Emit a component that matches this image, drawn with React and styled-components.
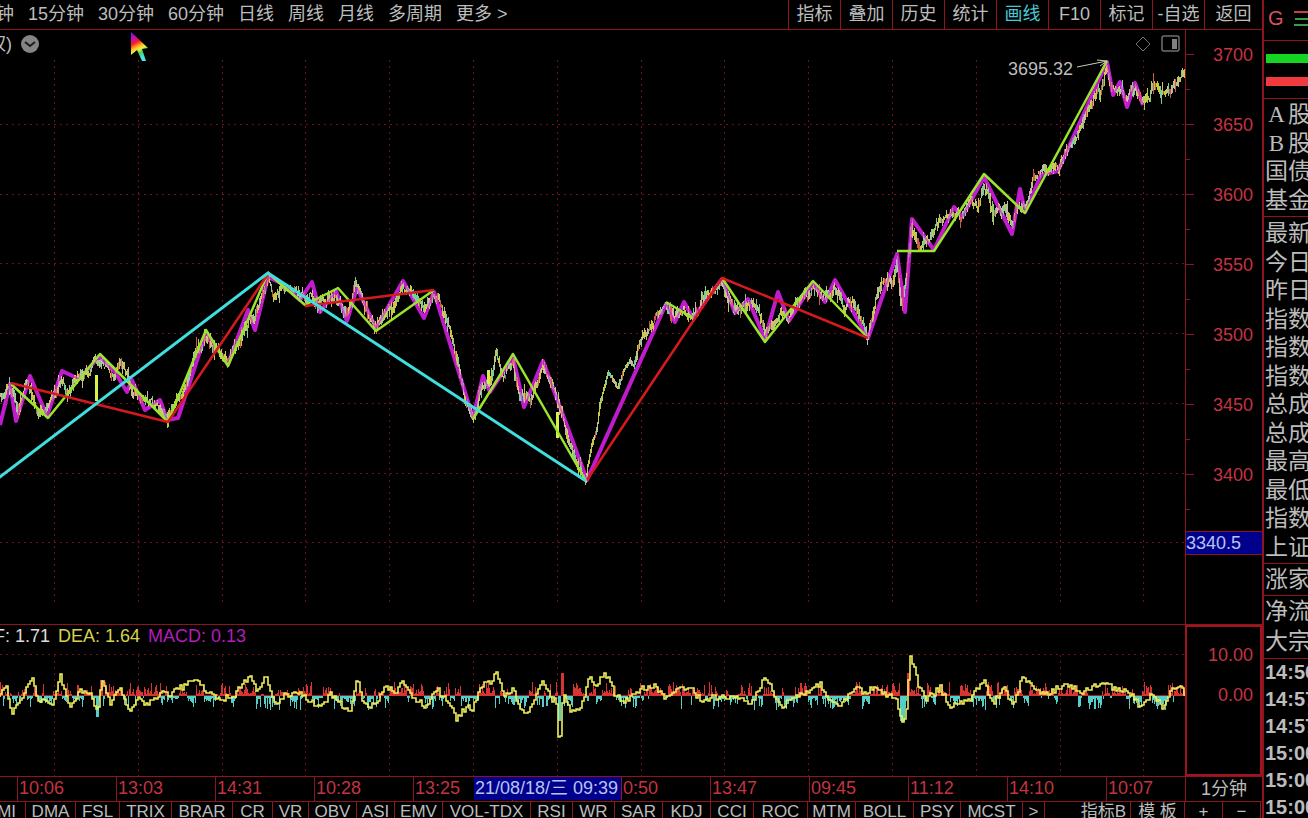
import React from 'react'
import styled, { createGlobalStyle } from 'styled-components'

const LINE = '#8e1420'
const DOT = '#6e121a'
const LABEL = '#c23440'
const TEXT = '#bcbcbc'

const PERIODS = ['5分钟', '15分钟', '30分钟', '60分钟', '日线', '周线', '月线', '多周期', '更多 >']

const TOOLS = ['指标', '叠加', '历史', '统计', '画线', 'F10', '标记', '-自选', '返回']

const ACTIVE_TOOL = '画线'

const PRICES = ['3700', '3650', '3600', '3550', '3500', '3450', '3400']

const TIMES = ['10:06', '13:03', '14:31', '10:28', '13:25', '', '10:50', '13:47', '09:45', '11:12', '14:10', '10:07']

const INDICATORS = [
  ['DMI', 50], ['DMA', 50], ['FSL', 44], ['TRIX', 52], ['BRAR', 61], ['CR', 40], ['VR', 36],
  ['OBV', 48], ['ASI', 38], ['EMV', 48], ['VOL-TDX', 88], ['RSI', 42], ['WR', 42], ['SAR', 48],
  ['KDJ', 48], ['CCI', 43], ['ROC', 54], ['MTM', 48], ['BOLL', 58], ['PSY', 47], ['MCST', 62], ['>', 22]
]

const QUOTES = ['最新', '今日', '昨日', '指数', '指数', '指数', '总成', '总成', '最高', '最低', '指数', '上证']

const TICKS = ['14:56', '14:57', '14:57', '15:00', '15:00', '15:00']

const SEGMENT_LINE = [
  [-4, 480], [268, 273], [586, 481]
]

const TREND_LINES = [
  [[11, 383], [168, 422], [268, 274]],
  [[305, 306], [434, 290]],
  [[587, 480], [722, 278], [868, 338]]
]

const STROKE_LINES = [
  [[11, 384], [48, 418], [100, 354], [168, 422], [206, 330], [228, 366], [268, 273], [305, 305], [338, 288], [376, 331], [434, 290]],
  [[473, 419], [513, 354], [586, 481]],
  [[666, 302], [693, 318]],
  [[722, 278], [765, 342], [813, 281], [868, 338]],
  [[897, 251], [934, 251], [984, 174], [1025, 213], [1107, 61]]
]

const PEN_LINE = [
  [0, 425], [10, 384], [16, 421], [30, 376], [47, 416], [62, 371], [79, 379], [99, 357], [115, 372], [127, 392],
  [132, 380], [145, 410], [160, 400], [167, 420], [178, 418], [206, 333], [228, 364], [248, 310], [255, 330],
  [268, 277], [283, 284], [300, 300], [312, 282], [320, 312], [336, 291], [347, 321], [357, 288], [376, 328],
  [403, 281], [424, 318], [434, 292], [473, 418], [483, 376], [490, 392], [513, 357], [524, 407], [543, 361],
  [587, 480], [666, 304], [675, 322], [684, 302], [693, 318], [722, 279], [735, 313], [748, 299], [765, 339],
  [778, 292], [789, 321], [813, 283], [825, 302], [835, 280], [868, 338], [897, 254], [905, 312], [912, 219],
  [934, 250], [954, 207], [962, 217], [984, 177], [1012, 234], [1020, 189], [1025, 212], [1041, 175], [1058, 171],
  [1107, 62], [1113, 95], [1120, 82], [1127, 107], [1135, 83], [1143, 105]
]

const PRICE_LINE = [
  [0, 398], [5, 390], [8, 382], [14, 388], [18, 408], [24, 390], [28, 382], [34, 398], [38, 412], [46, 408],
  [52, 392], [62, 376], [68, 392], [75, 380], [90, 366], [99, 358], [106, 364], [114, 374], [120, 357],
  [127, 372], [132, 384], [142, 398], [150, 402], [160, 408], [168, 416], [174, 400], [184, 386], [196, 350],
  [206, 335], [214, 345], [228, 362], [240, 340], [248, 318], [256, 310], [268, 281], [274, 293], [283, 281],
  [290, 285], [300, 295], [312, 290], [320, 303], [336, 292], [347, 315], [352, 300], [355, 280], [360, 290],
  [376, 325], [392, 305], [403, 285], [412, 290], [424, 312], [430, 297], [434, 294], [443, 308], [452, 333],
  [457, 360], [465, 395], [473, 414], [478, 400], [483, 385], [490, 385], [496, 354], [502, 372], [513, 360],
  [520, 390], [530, 400], [543, 367], [551, 380], [558, 400], [563, 415], [570, 440], [577, 462], [586, 475],
  [592, 445], [597, 430], [600, 405], [608, 373], [612, 376], [618, 388], [624, 370], [630, 360], [634, 366],
  [640, 342], [644, 332], [650, 325], [660, 308], [666, 306], [675, 315], [684, 310], [690, 314], [700, 305],
  [706, 292], [712, 289], [722, 282], [727, 292], [735, 308], [745, 305], [757, 303], [761, 318], [765, 334],
  [780, 310], [789, 316], [800, 300], [812, 286], [825, 295], [836, 288], [845, 308], [853, 298], [862, 320],
  [868, 332], [876, 300], [882, 280], [888, 278], [893, 283], [897, 260], [901, 298], [903, 300], [907, 270],
  [912, 224], [918, 237], [920, 247], [925, 242], [930, 235], [936, 225], [940, 215], [950, 212], [962, 214],
  [972, 200], [978, 204], [984, 184], [990, 197], [994, 213], [998, 205], [1002, 212], [1006, 208],
  [1012, 225], [1018, 205], [1022, 203], [1027, 205], [1034, 174], [1040, 172], [1048, 165], [1058, 168],
  [1066, 152], [1080, 126], [1094, 96], [1098, 85], [1101, 93], [1107, 68], [1113, 90], [1122, 88],
  [1127, 98], [1135, 88], [1143, 100], [1150, 94], [1155, 84], [1160, 90], [1165, 84], [1170, 92],
  [1175, 80], [1179, 73], [1185, 67]
]

const DIF_LINE = [
  [0, 697], [5, 684], [12, 714], [24, 693], [31, 677], [37, 700], [52, 703], [60, 676], [69, 706], [80, 691],
  [90, 692], [97, 712], [101, 680], [106, 693], [110, 705], [119, 688], [130, 711], [138, 696], [145, 706],
  [160, 693], [170, 695], [176, 685], [182, 688], [190, 680], [198, 680], [205, 692], [220, 699], [232, 697],
  [240, 686], [250, 677], [256, 690], [265, 676], [275, 706], [285, 695], [300, 694], [320, 708], [330, 694],
  [350, 712], [357, 679], [362, 704], [375, 706], [385, 686], [395, 692], [403, 681], [412, 696], [425, 706],
  [437, 689], [448, 703], [456, 719], [465, 708], [473, 708], [480, 685], [490, 682], [496, 671], [502, 694],
  [513, 690], [520, 710], [527, 712], [535, 695], [542, 681], [550, 697], [556, 702], [558, 737], [560, 735],
  [563, 690], [570, 713], [580, 708], [590, 675], [597, 690], [601, 675], [608, 677], [615, 697], [625, 700],
  [640, 690], [655, 685], [665, 700], [675, 690], [690, 688], [700, 700], [720, 697], [735, 697], [750, 705],
  [765, 676], [780, 708], [795, 695], [810, 690], [820, 684], [830, 700], [840, 706], [855, 688], [865, 692],
  [875, 688], [885, 695], [895, 697], [902, 724], [906, 708], [910, 656], [914, 668], [918, 685], [925, 700],
  [940, 688], [948, 706], [958, 704], [970, 698], [983, 680], [992, 704], [1003, 688], [1013, 705], [1022, 677],
  [1035, 690], [1050, 692], [1065, 684], [1080, 692], [1095, 685], [1107, 683], [1115, 690], [1128, 690],
  [1140, 708], [1150, 696], [1162, 706], [1172, 690], [1180, 686], [1185, 696]
]

const createRandom = (seed) => {
  let value = seed
  return () => {
    value = (value * 16807) % 2147483647
    return value / 2147483647
  }
}

const valueAt = (points, x) => {
  const next = points.findIndex((point) => point[0] >= x)
  if (next <= 0) return points[0][1]
  const [x1, y1] = points[next - 1]
  const [x2, y2] = points[next]
  return y1 + (y2 - y1) * (x - x1) / (x2 - x1)
}

const toPoints = (points) => points.map((point) => point.join(',')).join(' ')

const gridXs = Array.from({ length: 14 }, (_, i) => Math.round(54 + i * 83.8) + 0.5)

const gridYs = [124, 194, 263, 333, 403, 473, 542]

// one short vertical bar per minute, grouped by colour
const buildCandles = () => {
  const random = createRandom(77)
  const groups = { '#e6ec58': '', '#8df2b4': '', '#e8dcc0': '', '#ee6a50': '' }
  const colors = Object.keys(groups)
  let drift = 0
  for (let x = 0; x < 1185; x += 1) {
    const pick = random()
    const color = colors[pick < 0.46 ? 0 : pick < 0.7 ? 1 : pick < 0.88 ? 2 : 3]
    // the recovery after the low is a thin, clean trace
    const calm = x > 587 && x < 636
    drift = calm ? 0 : drift * 0.7 + (random() - 0.42) * 6
    const from = valueAt(PRICE_LINE, x) + drift
    const to = valueAt(PRICE_LINE, x + 1) + drift
    const spread = calm ? 3 : random() < 0.16 ? 10 : 5
    const top = Math.round(Math.min(from, to) - random() * spread)
    const bottom = Math.round(Math.max(from, to) + 1 + random() * spread)
    groups[color] += `M${x + 0.5} ${top}V${bottom}`
  }
  return groups
}

const buildHistogram = () => {
  const random = createRandom(401)
  let up = ''
  let down = ''
  let sign = 1
  for (let x = 0; x < 1185; x += 1) {
    const bias = (696 - valueAt(DIF_LINE, x)) * 0.015
    if (random() < 0.3) sign = random() - 0.5 + bias > 0 ? 1 : -1
    let height = sign * (1 + Math.pow(random(), 2) * 12)
    if (Math.abs(x - 97) < 2) height = -20
    if (Math.abs(x - 101) < 2) height = 15
    if (Math.abs(x - 559) < 2) height = -24
    if (Math.abs(x - 562) < 2) height = 22
    if (Math.abs(x - 902) < 3) height = -24
    if (Math.abs(x - 908) < 2) height = 22
    if (height > 0) up += `M${x + 0.5} 696V${Math.round(695 - height)}`
    else down += `M${x + 0.5} 696V${Math.round(697 - height)}`
  }
  return { up, down }
}

const buildDif = () => {
  const random = createRandom(9)
  let path = 'M0 697'
  for (let x = 0; x <= 1185; x += 2) {
    const y = Math.round(valueAt(DIF_LINE, x) + (random() - 0.5) * 6)
    path += `V${y}H${x + 2}`
  }
  return path
}

const candles = buildCandles()
const histogram = buildHistogram()
const dif = buildDif()

const PriceChart = () => (
  <Drawing viewBox="0 30 1185 594" preserveAspectRatio="none" aria-label="指数走势">
    <g stroke={DOT} strokeDasharray="2 4">
      {gridXs.map((x) => <line key={x} x1={x} x2={x} y1="60" y2="604" />)}
      {gridYs.map((y) => <line key={y} x1="0" x2="1185" y1={y + 0.5} y2={y + 0.5} />)}
    </g>
    <g fill="none" strokeLinejoin="round">
      <polyline points={toPoints(PEN_LINE)} stroke="#c01cce" strokeWidth="4" />
      {Object.keys(candles).map((color) => (
        <path key={color} d={candles[color]} stroke={color} strokeOpacity="0.85" />
      ))}
      <polyline points={toPoints(PEN_LINE)} stroke="#c01cce" strokeOpacity="0.6" strokeWidth="2" />
      <path d="M96.5 375V401M488.5 370V384M557.5 412V438" stroke="#d8f04a" strokeWidth="3" />
      {STROKE_LINES.map((line, i) => (
        <polyline key={i} points={toPoints(line)} stroke="#9ae62e" strokeWidth="2.5" />
      ))}
      {TREND_LINES.map((line, i) => (
        <polyline key={i} points={toPoints(line)} stroke="#d41a1c" strokeWidth="2.5" />
      ))}
      <polyline points={toPoints(SEGMENT_LINE)} stroke="#40dede" strokeWidth="3" />
      <path d="M1077 67L1107 61M1097 60L1107 61L1100 66" stroke="#c8c8b0" />
    </g>
  </Drawing>
)

const MacdChart = () => (
  <Drawing viewBox="0 625 1185 151" preserveAspectRatio="none" aria-label="MACD">
    <g stroke={DOT} strokeDasharray="2 4">
      {gridXs.map((x) => <line key={x} x1={x} x2={x} y1="655" y2="776" />)}
      <line x1="0" x2="1185" y1="654.5" y2="654.5" />
    </g>
    <line x1="0" x2="1185" y1="695.5" y2="695.5" stroke="#a02030" />
    <path d={histogram.up} stroke="#d83434" />
    <path d={histogram.down} stroke="#54cfc8" />
    <path d={dif} fill="none" stroke="#f0f05c" strokeWidth="1.6" />
  </Drawing>
)

const PriceTicks = () => (
  <TickMarks width="8" height="594" viewBox="0 30 8 594" aria-hidden="true">
    {PRICES.map((price, i) => (
      <path key={price} d={`M0 ${54.5 + i * 70}H8M0 ${89.5 + i * 70}H4`} stroke={LINE} />
    ))}
  </TickMarks>
)

const Pointer = () => (
  <PointerIcon width="20" height="32" viewBox="0 0 20 32" aria-hidden="true">
    <defs>
      <linearGradient id="rainbow" x1="0" y1="0" x2="0.3" y2="1">
        <stop offset="0" stopColor="#4a20f0" />
        <stop offset="0.22" stopColor="#c010c0" />
        <stop offset="0.4" stopColor="#f01830" />
        <stop offset="0.58" stopColor="#ffc020" />
        <stop offset="0.68" stopColor="#f0f040" />
        <stop offset="0.8" stopColor="#40d860" />
        <stop offset="1" stopColor="#50e0e8" />
      </linearGradient>
    </defs>
    <path d="M1 1V24L7 19L12 30H16L12 18L18 17Z" fill="url(#rainbow)" />
  </PointerIcon>
)

const App = () => (
  <Screen>
    <GlobalStyle />
    <Main>
      <TopBar>
        <Periods>
          {PERIODS.map((period) => <BarButton key={period}>{period}</BarButton>)}
        </Periods>
        <Tools>
          {TOOLS.map((tool) => (
            <ToolButton key={tool} $active={tool === ACTIVE_TOOL}>{tool}</ToolButton>
          ))}
        </Tools>
      </TopBar>

      <PricePane>
        <Plot>
          <PriceChart />
          <ChartTitle>
            <span>权)</span>
            <svg width="20" height="20" viewBox="0 0 20 20" aria-hidden="true">
              <circle cx="10" cy="10" r="9" fill="#858585" />
              <path d="M5 8L10 12L15 8" fill="none" stroke="#1c1c1c" strokeWidth="2" />
            </svg>
          </ChartTitle>
          <ChartActions>
            <svg width="16" height="16" viewBox="0 0 16 16" aria-hidden="true">
              <path d="M8 1L15 8L8 15L1 8Z" fill="none" stroke="#707070" />
            </svg>
            <svg width="20" height="18" viewBox="0 0 20 18" aria-hidden="true">
              <rect x="1" y="1" width="17" height="15" rx="2" fill="none" stroke="#707070" strokeWidth="1.5" />
              <rect x="11" y="4" width="5" height="10" fill="#808080" />
            </svg>
          </ChartActions>
          <HighLabel>3695.32</HighLabel>
          <Pointer />
        </Plot>
        <PriceAxis>
          <PriceTicks />
          {PRICES.map((price) => <AxisLabel key={price}>{price}</AxisLabel>)}
          <CurrentPrice>3340.5</CurrentPrice>
        </PriceAxis>
      </PricePane>

      <MacdPane>
        <Plot>
          <MacdChart />
          <MacdTitle>
            <MacdValue $color="#dcdcdc">DIF: 1.71</MacdValue>
            <MacdValue $color="#d4d44c">DEA: 1.64</MacdValue>
            <MacdValue $color="#b41cbc">MACD: 0.13</MacdValue>
          </MacdTitle>
        </Plot>
        <MacdAxis>
          <AxisLabel>10.00</AxisLabel>
          <AxisLabel>0.00</AxisLabel>
        </MacdAxis>
      </MacdPane>

      <TimeRow>
        <TimeAxis>
          {TIMES.map((time, i) => <TimeLabel key={i}>{time}</TimeLabel>)}
          <SelectedTime>21/08/18/三 09:39</SelectedTime>
        </TimeAxis>
        <PeriodButton>1分钟</PeriodButton>
      </TimeRow>

      <IndicatorRow>
        <Indicators>
          {INDICATORS.map(([name, width]) => (
            <IndicatorButton key={name} $width={width}>{name}</IndicatorButton>
          ))}
        </Indicators>
        <IndicatorButton $width={54}>指标B</IndicatorButton>
        <IndicatorButton $width={54}>模 板</IndicatorButton>
        <ZoomButtons>
          <IndicatorButton $width={38}>+</IndicatorButton>
          <IndicatorButton $width={38}>−</IndicatorButton>
        </ZoomButtons>
      </IndicatorRow>
    </Main>

    <Side>
      <SideHead>
        <span>G</span>
        <svg width="14" height="18" viewBox="0 0 14 18" aria-hidden="true">
          <path d="M0 2H14" stroke="#c84040" strokeWidth="2" />
          <path d="M1 9H14M0 15H14" stroke="#3c9c48" strokeWidth="2" />
        </svg>
      </SideHead>
      <Strength>
        <StrengthBar $color="#14d424" />
        <StrengthBar $color="#f03a3e" />
      </Strength>
      <MarketList>
        <li><Letter>A</Letter>股</li>
        <li><Letter>B</Letter>股</li>
        <li>国债</li>
        <li>基金</li>
      </MarketList>
      <QuoteList>
        {QUOTES.map((quote, i) => <li key={i}>{quote}</li>)}
      </QuoteList>
      <CountList>
        <li>涨家</li>
      </CountList>
      <FlowList>
        <li>净流</li>
        <li>大宗</li>
      </FlowList>
      <TickList>
        {TICKS.map((tick, i) => <li key={i}>{tick}</li>)}
      </TickList>
    </Side>
  </Screen>
)

const GlobalStyle = createGlobalStyle`
  * {
    box-sizing: border-box;
  }

  body {
    margin: 0;
    background: #000;
    overflow: hidden;
  }

  button {
    margin: 0;
    padding: 0;
    border: 0;
    background: none;
    color: inherit;
    font: inherit;
    white-space: nowrap;
    cursor: pointer;
  }

  ul {
    margin: 0;
    padding: 0;
    list-style: none;
  }
`

const Screen = styled.div`
  display: flex;
  height: 100vh;
  overflow: hidden;
  background: #000;
  color: ${TEXT};
  font-family: "Liberation Sans", "Noto Sans CJK SC", sans-serif;
  font-size: 18px;
`

const Main = styled.main`
  display: flex;
  flex-direction: column;
  flex: 1;
  min-width: 0;
`

const TopBar = styled.header`
  display: flex;
  justify-content: space-between;
  height: 30px;
  border-bottom: 1px solid ${LINE};
  overflow: hidden;
`

const Periods = styled.nav`
  display: flex;
  align-items: flex-start;
  gap: 14px;
  margin-left: -32px;
`

const BarButton = styled.button`
  line-height: 28px;
`

const Tools = styled.div`
  display: flex;
  width: 474px;
`

const ToolButton = styled.button`
  width: 52px;
  padding-bottom: 1px;
  border-left: 1px solid ${LINE};
  color: ${(props) => props.$active ? '#48c8d0' : TEXT};
  line-height: 28px;

  &:last-child {
    flex: 1;
  }
`

const PricePane = styled.section`
  display: flex;
  flex: 1;
  min-height: 0;
`

const Plot = styled.div`
  position: relative;
  flex: 1;
  min-width: 0;
  overflow: hidden;
`

const Drawing = styled.svg`
  display: block;
  width: 100%;
  height: 100%;
`

const ChartTitle = styled.div`
  position: absolute;
  top: 2px;
  left: -12px;
  display: flex;
  align-items: center;
  gap: 8px;
  line-height: 24px;
`

const ChartActions = styled.div`
  position: absolute;
  top: 5px;
  right: 4px;
  display: flex;
  align-items: center;
  gap: 10px;
`

const HighLabel = styled.span`
  position: absolute;
  top: 28px;
  right: 112px;
  line-height: 22px;
`

const PointerIcon = styled.svg`
  position: absolute;
  top: 1px;
  left: 130px;
`

const PriceAxis = styled.div`
  position: relative;
  display: flex;
  flex-direction: column;
  gap: 50px;
  width: 77px;
  padding-top: 15px;
  border-left: 1px solid ${LINE};
`

const TickMarks = styled.svg`
  position: absolute;
  top: 0;
  left: 0;
`

const AxisLabel = styled.span`
  padding-right: 9px;
  color: ${LABEL};
  line-height: 20px;
  text-align: right;
`

const CurrentPrice = styled.span`
  height: 24px;
  margin-top: -4px;
  border: solid ${LINE};
  border-width: 1px 0;
  background: #00008c;
  color: #b8c4f0;
  line-height: 22px;
`

const MacdPane = styled.section`
  display: flex;
  height: 152px;
  border-top: 1px solid ${LINE};
`

const MacdTitle = styled.div`
  position: absolute;
  top: 0;
  left: -24px;
  display: flex;
  gap: 8px;
  line-height: 22px;
`

const MacdValue = styled.span`
  color: ${(props) => props.$color};
`

const MacdAxis = styled.div`
  display: flex;
  flex-direction: column;
  gap: 20px;
  width: 77px;
  padding-top: 18px;
  border: 2px solid #a01420;

  ${AxisLabel} {
    padding-right: 7px;
  }
`

const TimeRow = styled.div`
  display: flex;
  height: 25px;
  border-top: 1px solid ${LINE};
`

const TimeAxis = styled.div`
  position: relative;
  display: flex;
  flex: 1;
  min-width: 0;
  padding-left: 17px;
  overflow: hidden;
`

const TimeLabel = styled.span`
  flex: 0 0 99px;
  border-left: 1px solid ${LINE};
  padding-left: 1px;
  color: ${LABEL};
  line-height: 23px;
`

const SelectedTime = styled.span`
  position: absolute;
  top: 0;
  left: 474px;
  width: 148px;
  padding-left: 1px;
  border-right: 1px solid ${LINE};
  background: #00008c;
  color: #b8c4f0;
  line-height: 23px;
  white-space: nowrap;
`

const PeriodButton = styled.button`
  width: 77px;
  border-left: 1px solid ${LINE};
  line-height: 22px;
`

const IndicatorRow = styled.div`
  display: flex;
  height: 17px;
  border-top: 1px solid ${LINE};
  font-size: 17px;
  overflow: hidden;
`

const Indicators = styled.div`
  display: flex;
  flex: 1;
  min-width: 0;
  margin-left: -24px;
  overflow: hidden;
`

const IndicatorButton = styled.button`
  flex: 0 0 ${(props) => props.$width}px;
  height: 20px;
  border-right: 1px solid ${LINE};
  line-height: 20px;
  overflow: hidden;
`

const ZoomButtons = styled.div`
  display: flex;
  width: 77px;
`

const Side = styled.aside`
  width: 46px;
  border-left: 2px solid ${LINE};
  font-family: "Noto Sans CJK SC", sans-serif;
  font-size: 23px;
  white-space: nowrap;
  overflow: hidden;
`

const SideHead = styled.div`
  display: flex;
  align-items: center;
  justify-content: space-between;
  height: 41px;
  padding: 0 0 3px 4px;
  border-bottom: 1px solid ${LINE};
  color: #d8545c;
  font-family: "Liberation Sans", sans-serif;
  font-size: 20px;
`

const Strength = styled.div`
  display: flex;
  flex-direction: column;
  gap: 14px;
  height: 58px;
  padding: 13px 0 0 2px;
  border-bottom: 1px solid ${LINE};
`

const StrengthBar = styled.div`
  height: 9px;
  background: ${(props) => props.$color};
`

const SideList = styled.ul`
  display: grid;
  grid-auto-rows: minmax(0, 1fr);
  padding-left: 1px;
  border-bottom: 1px solid ${LINE};
  line-height: 26px;
`

const MarketList = styled(SideList)`
  height: 118px;
  padding-bottom: 3px;
`

const QuoteList = styled(SideList)`
  height: 347px;
  padding-top: 1px;
  padding-bottom: 3px;
`

const CountList = styled(SideList)`
  height: 32px;
`

const FlowList = styled(SideList)`
  height: 63px;
  padding-bottom: 3px;
`

const Letter = styled.span`
  display: inline-block;
  width: 23px;
  font-family: "Liberation Serif", serif;
  line-height: 20px;
  text-align: center;
`

const TickList = styled.ul`
  padding-left: 1px;
  font-family: "Liberation Sans", sans-serif;
  font-size: 20px;
  font-weight: bold;
  line-height: 27px;
`

export default App
